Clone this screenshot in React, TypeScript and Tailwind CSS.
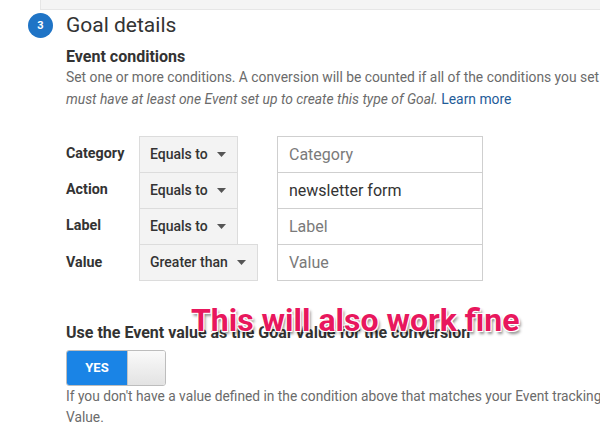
import React from "react";

const rows = [
  { label: "Category", op: "Equals to", value: "", placeholder: "Category" },
  { label: "Action", op: "Equals to", value: "newsletter form", placeholder: "Action" },
  { label: "Label", op: "Equals to", value: "", placeholder: "Label" },
  { label: "Value", op: "Greater than", value: "", placeholder: "Value" },
];

function Caret() {
  return (
    <svg width="9" height="5" viewBox="0 0 9 5" className="shrink-0">
      <path d="M0 0 L9 0 L4.5 5 Z" fill="#555" />
    </svg>
  );
}

export default function App() {
  return (
    <div className="relative w-[600px] h-[444px] overflow-hidden bg-white font-['Roboto','Liberation_Sans',sans-serif] text-[#333]">
      <div className="ml-[40px] h-[10px] bg-[#f4f4f4] border-l border-b border-[#e6e6e6]" />
      <div className="mt-[3px] flex items-center pl-[28px] h-[25px]">
        <div className="w-[25px] h-[25px] rounded-full bg-[#1f74c6] flex items-center justify-center text-white text-[11px] font-bold leading-none">
          3
        </div>
        <div className="ml-[13px] text-[21px] leading-[25px] text-[#333]">Goal details</div>
      </div>
      <div className="pl-[66px] whitespace-nowrap">
        <div className="mt-[9px] text-[16px] leading-[19px] font-bold text-[#333]">Event conditions</div>
        <div className="text-[13.85px] leading-[22px] text-[#6b6b6b]">
          <div>Set one or more conditions. A conversion will be counted if all of the conditions you set are met. You</div>
          <div>
            <span className="italic">must have at least one Event set up to create this type of Goal.</span>{" "}
            <span className="text-[#1f5c99]">Learn more</span>
          </div>
        </div>

        <div className="mt-[26px] flex flex-col">
          {rows.map((r, i) => (
            <div key={r.label} className={`flex items-stretch ${i === rows.length - 1 ? "h-[37px]" : "h-[36px]"}`}>
              <div className="w-[73px] flex items-center text-[14.3px] font-bold text-[#333]">{r.label}</div>
              <div className="w-[138px] flex items-stretch">
                <div
                  className={`inline-flex items-center gap-[9px] pl-[10px] pr-[11px] bg-[#f3f3f3] border-[#dcdcdc] border-x border-t ${
                    i === rows.length - 1 ? "border-b" : ""
                  } text-[14px] font-medium text-[#333]`}
                >
                  <span>{r.op}</span>
                  <Caret />
                </div>
              </div>
              <div
                className={`w-[206px] flex items-center pl-[11px] border-[#cfcfcf] border-x border-t ${
                  i === rows.length - 1 ? "border-b" : ""
                } text-[16px]`}
              >
                {r.value ? <span className="text-[#333]">{r.value}</span> : <span className="text-[#7a7a7a]">{r.placeholder}</span>}
              </div>
            </div>
          ))}
        </div>

        <div className="mt-[42px] text-[16px] leading-[20px] font-bold text-[#333]">
          Use the Event value as the Goal Value for the conversion
        </div>
        <div className="mt-[7px] flex w-[100px] h-[36px] rounded-[3px] overflow-hidden border border-[#bdbdbd]">
          <div className="w-[60px] bg-[#1a84e6] flex items-center justify-center text-white text-[13px] font-bold">YES</div>
          <div className="flex-1 bg-gradient-to-b from-[#fafafa] to-[#e3e3e3] border-l border-[#c4c4c4]" />
        </div>
        <div className="text-[13.75px] leading-[21px] text-[#6b6b6b]">
          <div>If you don't have a value defined in the condition above that matches your Event tracking Goal</div>
          <div>Value.</div>
        </div>
      </div>

      <div className="absolute left-[191px] top-[304px] text-[32px] leading-[32px] font-bold text-[#e8175d] whitespace-nowrap [text-shadow:-1px_-1px_0_#fff,1px_-1px_0_#fff,-1px_1px_0_#fff,1px_1px_0_#fff,2px_3px_3px_rgba(0,0,0,0.45)]">
        This will also work fine
      </div>
    </div>
  );
}
